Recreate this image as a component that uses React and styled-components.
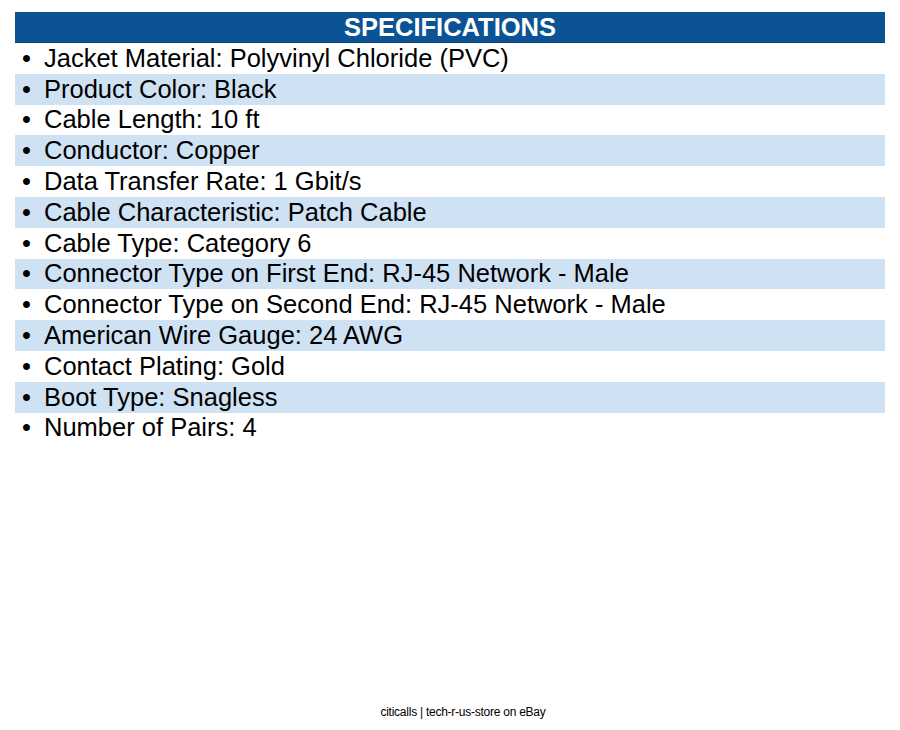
import React from 'react'
import styled, { createGlobalStyle } from 'styled-components'

const GlobalStyle = createGlobalStyle`
  body {
    margin: 0;
    background: #ffffff;
    font-family: "Liberation Sans", Arial, sans-serif;
  }
`

const Page = styled.div`
  width: 900px;
  height: 730px;
  display: flex;
  flex-direction: column;
  box-sizing: border-box;
  padding: 12px 15px 0 15px;
`

const Header = styled.div`
  height: 30px;
  background: #0b5394;
  border-bottom: 1px solid #083d6e;
  color: #ffffff;
  font-weight: bold;
  font-size: 25.5px;
  line-height: 31px;
  text-align: center;
`

const List = styled.ul`
  list-style: none;
  margin: 0;
  padding: 0;
`

const Row = styled.li`
  height: 30.8px;
  display: flex;
  align-items: center;
  background: ${p => (p.$alt ? '#cfe2f3' : '#ffffff')};
  font-size: 25.5px;
  color: #000000;
`

const Bullet = styled.span`
  width: 29px;
  padding-left: 7px;
  box-sizing: border-box;
`

const Footer = styled.div`
  margin-top: auto;
  height: 25px;
  padding-left: 26px;
  text-align: center;
  font-size: 12px;
  letter-spacing: -0.25px;
  color: #000000;
`

const specs = [
  'Jacket Material: Polyvinyl Chloride (PVC)',
  'Product Color: Black',
  'Cable Length: 10 ft',
  'Conductor: Copper',
  'Data Transfer Rate: 1 Gbit/s',
  'Cable Characteristic: Patch Cable',
  'Cable Type: Category 6',
  'Connector Type on First End: RJ-45 Network - Male',
  'Connector Type on Second End: RJ-45 Network - Male',
  'American Wire Gauge: 24 AWG',
  'Contact Plating: Gold',
  'Boot Type: Snagless',
  'Number of Pairs: 4',
]

export default function App() {
  return (
    <Page>
      <GlobalStyle />
      <Header>SPECIFICATIONS</Header>
      <List>
        {specs.map((s, i) => (
          <Row key={s} $alt={i % 2 === 1}>
            <Bullet>•</Bullet>
            {s}
          </Row>
        ))}
      </List>
      <Footer>citicalls | tech-r-us-store on eBay</Footer>
    </Page>
  )
}
